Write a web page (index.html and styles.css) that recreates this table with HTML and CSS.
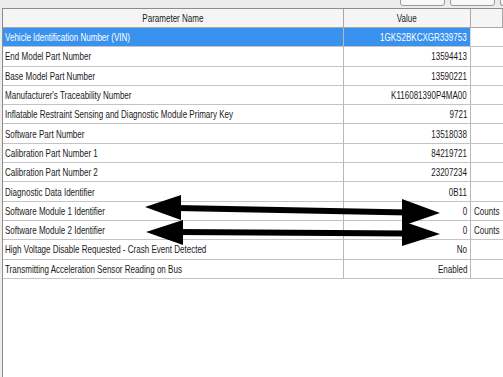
FILE: index.html
```html
<!DOCTYPE html>
<html>
<head>
<meta charset="utf-8">
<link rel="stylesheet" href="styles.css">
</head>
<body>
<div class="toolbar">
  <div class="btn"></div>
  <div class="btn"></div>
  <div class="btn edge"></div>
</div>
<div class="panel">
  <div class="grid">
    <div class="hd c1"><span class="t">Parameter Name</span></div><div class="hd c2"><span class="t">Value</span></div><div class="hd c3"></div>

    <div class="cell c1 sel"><span class="t">Vehicle Identification Number (VIN)</span></div><div class="cell c2 sel"><span class="t">1GKS2BKCXGR339753</span></div><div class="cell c3"></div>
    <div class="cell c1"><span class="t">End Model Part Number</span></div><div class="cell c2"><span class="t">13594413</span></div><div class="cell c3"></div>
    <div class="cell c1"><span class="t">Base Model Part Number</span></div><div class="cell c2"><span class="t">13590221</span></div><div class="cell c3"></div>
    <div class="cell c1"><span class="t">Manufacturer's Traceability Number</span></div><div class="cell c2"><span class="t">K116081390P4MA00</span></div><div class="cell c3"></div>
    <div class="cell c1"><span class="t">Inflatable Restraint Sensing and Diagnostic Module Primary Key</span></div><div class="cell c2"><span class="t">9721</span></div><div class="cell c3"></div>
    <div class="cell c1"><span class="t">Software Part Number</span></div><div class="cell c2"><span class="t">13518038</span></div><div class="cell c3"></div>
    <div class="cell c1"><span class="t">Calibration Part Number 1</span></div><div class="cell c2"><span class="t">84219721</span></div><div class="cell c3"></div>
    <div class="cell c1"><span class="t">Calibration Part Number 2</span></div><div class="cell c2"><span class="t">23207234</span></div><div class="cell c3"></div>
    <div class="cell c1"><span class="t">Diagnostic Data Identifier</span></div><div class="cell c2"><span class="t">0B11</span></div><div class="cell c3"></div>
    <div class="cell c1"><span class="t">Software Module 1 Identifier</span></div><div class="cell c2"><span class="t">0</span></div><div class="cell c3"><span class="t">Counts</span></div>
    <div class="cell c1"><span class="t">Software Module 2 Identifier</span></div><div class="cell c2"><span class="t">0</span></div><div class="cell c3"><span class="t">Counts</span></div>
    <div class="cell c1"><span class="t">High Voltage Disable Requested - Crash Event Detected</span></div><div class="cell c2"><span class="t">No</span></div><div class="cell c3"></div>
    <div class="cell c1"><span class="t">Transmitting Acceleration Sensor Reading on Bus</span></div><div class="cell c2"><span class="t">Enabled</span></div><div class="cell c3"></div>
  </div>
</div>
<svg class="arrows" width="503" height="377" viewBox="0 0 503 377">
  <line x1="176" y1="208" x2="408" y2="212.5" stroke="#000" stroke-width="6"/>
  <polygon points="145,207 181,195 181,220" fill="#000"/>
  <polygon points="440,213 402,199 402,226" fill="#000"/>
  <line x1="178" y1="232" x2="408" y2="233.5" stroke="#000" stroke-width="6"/>
  <polygon points="146,232 183,220 183,245" fill="#000"/>
  <polygon points="440,234 402,221 402,246" fill="#000"/>
</svg>
</body>
</html>
```

FILE: styles.css
```css
html, body {
  margin: 0;
  padding: 0;
  width: 503px;
  height: 377px;
  overflow: hidden;
  background: #ececec;
  font-family: "Liberation Sans", Arial, sans-serif;
  font-size: 11px;
  color: #1a1a1a;
}

.toolbar {
  height: 8px;
  display: flex;
  justify-content: flex-end;
  gap: 5px;
  overflow: hidden;
}

.btn {
  width: 43px;
  height: 20px;
  margin-top: -16px;
  border: 1px solid #9a9a9a;
  border-radius: 3px;
  background: #f8f8f8;
}

.btn.edge {
  width: 2px;
  border-right: none;
  border-radius: 3px 0 0 3px;
}

.panel {
  margin-left: 2px;
  height: 369px;
  border-left: 1px solid #8c8c8c;
  border-top: 1px solid #8c8c8c;
  background: #fff;
  box-sizing: border-box;
}

.grid {
  display: grid;
  grid-template-columns: 341px 127px 32px;
  grid-template-rows: 19px repeat(13, 19.3px);
}

.t {
  display: inline-block;
  white-space: nowrap;
  transform: scaleX(0.73);
  transform-origin: left center;
}

.hd {
  background: #f5f5f5;
  border-bottom: 1px solid #a8a8a8;
  border-right: 1px solid #a8a8a8;
  text-align: center;
  line-height: 18px;
  box-sizing: border-box;
}

.hd .t {
  transform-origin: center center;
}

.cell {
  border-bottom: 1px solid #c4c4c4;
  border-right: 1px solid #b8b8b8;
  box-sizing: border-box;
  display: flex;
  align-items: center;
  white-space: nowrap;
  overflow: hidden;
}

.cell.c1 {
  padding-left: 2px;
}

.cell.c2 {
  justify-content: flex-end;
  padding-right: 3px;
}

.cell.c2 .t {
  transform-origin: right center;
}

.cell.c3 {
  padding-left: 3px;
  border-right: none;
}

.sel {
  background: #3a92ef;
  color: #fff;
}

.cell.c2.sel {
  border-right-color: #d8d8d8;
}

.arrows {
  position: absolute;
  left: 0;
  top: 0;
  pointer-events: none;
}
```
